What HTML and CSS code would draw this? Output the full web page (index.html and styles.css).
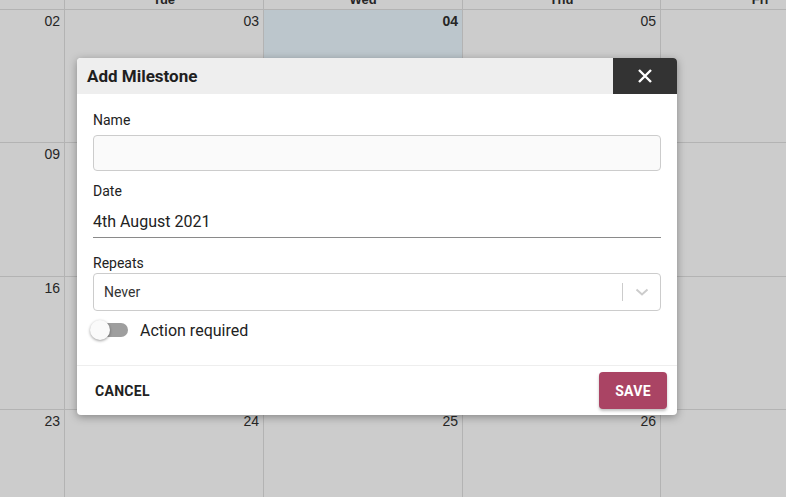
FILE: index.html
```html
<!DOCTYPE html>
<html>
<head>
<meta charset="utf-8">
<link rel="stylesheet" href="styles.css">
</head>
<body>
<div class="calendar">
  <div class="row head">
    <div class="cell"><span>Mon</span></div>
    <div class="cell"><span>Tue</span></div>
    <div class="cell"><span>Wed</span></div>
    <div class="cell w198"><span>Thu</span></div>
    <div class="cell"><span>Fri</span></div>
  </div>
  <div class="row r1">
    <div class="cell"><span>02</span></div>
    <div class="cell"><span>03</span></div>
    <div class="cell today"><span>04</span></div>
    <div class="cell w198"><span>05</span></div>
    <div class="cell"><span>06</span></div>
  </div>
  <div class="row r2">
    <div class="cell"><span>09</span></div>
    <div class="cell"><span>10</span></div>
    <div class="cell"><span>11</span></div>
    <div class="cell w198"><span>12</span></div>
    <div class="cell"><span>13</span></div>
  </div>
  <div class="row r3">
    <div class="cell"><span>16</span></div>
    <div class="cell"><span>17</span></div>
    <div class="cell"><span>18</span></div>
    <div class="cell w198"><span>19</span></div>
    <div class="cell"><span>20</span></div>
  </div>
  <div class="row r4">
    <div class="cell"><span>23</span></div>
    <div class="cell"><span>24</span></div>
    <div class="cell"><span>25</span></div>
    <div class="cell w198"><span>26</span></div>
    <div class="cell"><span>27</span></div>
  </div>
</div>

<div class="dialog">
  <div class="dlg-head">
    <div class="dlg-title">Add Milestone</div>
    <button class="close" aria-label="Close">
      <svg width="16" height="16" viewBox="0 0 16 16"><path d="M2 2 L14 14 M14 2 L2 14" stroke="#fff" stroke-width="2.4" fill="none"/></svg>
    </button>
  </div>
  <div class="dlg-body">
    <div class="label l-name">Name</div>
    <div class="input"></div>
    <div class="label l-date">Date</div>
    <div class="date-field">4th August 2021</div>
    <div class="label l-rep">Repeats</div>
    <div class="select">
      <span class="sel-val">Never</span>
      <span class="sel-sep"></span>
      <span class="sel-arrow">
        <svg width="14" height="8" viewBox="0 0 14 8"><path d="M1.5 1.5 L7 6.5 L12.5 1.5" stroke="#cccccc" stroke-width="2" fill="none"/></svg>
      </span>
    </div>
    <div class="toggle-row">
      <span class="toggle"><span class="track"></span><span class="knob"></span></span>
      <span class="toggle-label">Action required</span>
    </div>
  </div>
  <div class="dlg-foot">
    <button class="btn cancel">CANCEL</button>
    <button class="btn save">SAVE</button>
  </div>
</div>
</body>
</html>
```
FILE: styles.css
```css
html, body {
  margin: 0;
  padding: 0;
  width: 786px;
  height: 497px;
  overflow: hidden;
  background: #cccccc;
}
body {
  font-family: "Liberation Sans", Arial, sans-serif;
  position: relative;
}
.calendar {
  margin-left: -135px;
  width: 1000px;
}
.row {
  display: flex;
  border-bottom: 1px solid #b3b3b3;
}
.row.head { height: 9px; overflow: hidden; }
.row.r1 { height: 132px; }
.row.r2 { height: 133px; }
.row.r3 { height: 132px; }
.row.r4 { height: 140px; border-bottom: none; }
.cell {
  width: 199px;
  flex: none;
  box-sizing: border-box;
  border-left: 1px solid #b3b3b3;
  background: #cccccc;
  color: #262626;
  font-size: 14px;
  line-height: 16px;
  text-align: right;
  padding: 3px 4px 0 0;
}
.cell.w198 { width: 198px; }
.head .cell {
  text-align: center;
  font-weight: bold;
  font-size: 13px;
  padding: 0;
  line-height: 13px;
}
.head .cell span { display: block; margin-top: -7px; }
.cell.today { background: #bcc6cc; }
.cell.today span { font-weight: bold; }

.dialog {
  position: absolute;
  left: 77px;
  top: 58px;
  width: 600px;
  background: #ffffff;
  border-radius: 4px;
  overflow: hidden;
  box-shadow: 0 2px 8px rgba(0,0,0,0.35);
  font-family: Roboto, "Liberation Sans", sans-serif;
  color: #222222;
}
.dlg-head {
  display: flex;
  height: 36px;
  background: #eeeeee;
  align-items: center;
}
.dlg-title {
  flex: 1;
  padding-left: 10px;
  font-size: 17px;
  font-weight: bold;
  color: #1f1f1f;
}
.close {
  width: 64px;
  height: 36px;
  border: none;
  padding: 0;
  margin: 0;
  background: #333333;
  display: flex;
  align-items: center;
  justify-content: center;
}
.dlg-body {
  padding: 18px 16px 25px 16px;
  display: flex;
  flex-direction: column;
}
.label {
  font-size: 14px;
  line-height: 16px;
  color: #222;
}
.l-name { margin-bottom: 7px; }
.input {
  height: 34px;
  border: 1px solid #cccccc;
  border-radius: 4px;
  background: #fafafa;
}
.l-date { margin-top: 12px; }
.date-field {
  margin-top: 13px;
  font-size: 16px;
  line-height: 20px;
  padding-bottom: 5px;
  border-bottom: 1px solid #8a8a8a;
  color: #222;
}
.l-rep { margin-top: 17px; }
.select {
  margin-top: 2px;
  height: 36px;
  border: 1px solid #cccccc;
  border-radius: 4px;
  display: flex;
  align-items: center;
  padding-left: 10px;
}
.sel-val {
  flex: 1;
  font-size: 14px;
  color: #333;
}
.sel-sep {
  width: 1px;
  height: 18px;
  background: #cccccc;
}
.sel-arrow {
  width: 37px;
  display: flex;
  justify-content: center;
  align-items: center;
}
.toggle-row {
  margin-top: 9px;
  display: flex;
  align-items: center;
  height: 20px;
}
.toggle {
  position: relative;
  width: 38px;
  height: 20px;
  margin-left: -3px;
  display: inline-block;
}
.track {
  position: absolute;
  left: 4px;
  top: 3px;
  width: 34px;
  height: 14px;
  border-radius: 7px;
  background: #9e9e9e;
}
.knob {
  position: absolute;
  left: 0;
  top: 0;
  width: 20px;
  height: 20px;
  border-radius: 50%;
  background: #fafafa;
  box-shadow: 0 1px 3px rgba(0,0,0,0.4);
}
.toggle-label {
  margin-left: 12px;
  font-size: 16px;
  color: #222;
}
.dlg-foot {
  border-top: 1px solid #eeeeee;
  display: flex;
  justify-content: space-between;
  align-items: center;
  padding: 6px 10px 6px 10px;
}
.btn {
  font-family: Roboto, "Liberation Sans", sans-serif;
  font-size: 14px;
  font-weight: bold;
  letter-spacing: 0.3px;
  border: none;
  border-radius: 4px;
  height: 37px;
  padding: 0 8px;
  background: transparent;
}
.cancel { color: #222; }
.save {
  width: 68px;
  background: #aa4464;
  color: #ffffff;
  box-shadow: 0 2px 3px rgba(0,0,0,0.25);
}
```
